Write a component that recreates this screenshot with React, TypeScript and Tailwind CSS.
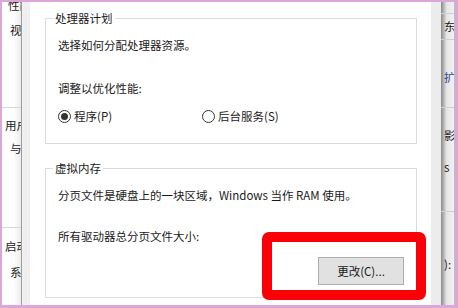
const font = "font-['Microsoft_YaHei','Noto_Sans_CJK_SC',sans-serif]";

const Radio = ({ checked, label }: { checked: boolean; label: string }) => {
    return (
        <div className="flex items-center gap-[3px]">
            <span className="flex h-[13px] w-[13px] items-center justify-center rounded-full border border-[#333333] bg-white">
                {checked && <span className="h-[7px] w-[7px] rounded-full bg-[#333333]"></span>}
            </span>
            <span>{label}</span>
        </div>
    )
}

const App = () => {
    return (
        <div className={`flex h-[308px] w-[458px] overflow-hidden bg-[#dca6d9] pb-[3px] pl-[2px] pr-[3px] pt-[2px] text-[11.5px] leading-[14px] text-[#1a1a1a] ${font}`}>
            {/* left window behind */}
            <div className="flex w-[19px] flex-col overflow-hidden whitespace-nowrap bg-gradient-to-r from-white from-60% to-[#ececec]">
                <div className="-mt-[4px] pl-[6px]">性能</div>
                <div className="mt-[11px] pl-[8px]">视</div>
                <div className="mt-[70px] h-px w-full bg-[#d6d6d6]"></div>
                <div className="mt-[10px] pl-[3px]">用户</div>
                <div className="mt-[9px] pl-[8px]">与</div>
                <div className="mt-[72px] h-px w-full bg-[#d6d6d6]"></div>
                <div className="mt-[11px] pl-[3px]">启动</div>
                <div className="mt-[12px] pl-[8px]">系</div>
            </div>
            <div className="w-px bg-[#9c9c9c]"></div>

            {/* dialog */}
            <div className="flex flex-1 bg-[#f0f0f0]">
                <div className="ml-[8px] flex w-[401px] flex-col bg-white pl-[15px] pr-[14px] pt-[9px]">
                    <fieldset className="border border-[#dcdcdc] px-[12px] pb-[20px]">
                        <legend className="ml-[-5px] px-[2px]">处理器计划</legend>
                        <div className="mt-[13px]">选择如何分配处理器资源。</div>
                        <div className="mt-[29px]">调整以优化性能:</div>
                        <div className="mt-[14px] flex gap-[90px]">
                            <Radio checked label="程序(P)" />
                            <Radio checked={false} label="后台服务(S)" />
                        </div>
                    </fieldset>

                    <fieldset className="relative mt-[17px] border border-[#dcdcdc] px-[12px] pb-[12px]">
                        <legend className="ml-[-5px] px-[2px]">虚拟内存</legend>
                        <div className="mt-[13px]">分页文件是硬盘上的一块区域，Windows 当作 RAM 使用。</div>
                        <div className="mt-[27px]">所有驱动器总分页文件大小:</div>
                        <div className="mt-[14px] flex justify-end">
                            <button className="h-[28px] w-[86px] border border-[#adadad] bg-[#e1e1e1] text-[11.5px] text-[#1a1a1a]">更改(C)...</button>
                        </div>
                        {/* red annotation */}
                        <div className="pointer-events-none absolute bottom-[-3px] right-[-10px] h-[68px] w-[164px] rounded-[7px] border-[10px] border-[#fb0007]"></div>
                    </fieldset>
                </div>
                <div className="w-[10px] bg-[#ececec]"></div>
            </div>

            {/* right window behind */}
            <div className="flex w-[14px] bg-gradient-to-r from-[#8a8a8a] via-[#e6e6e6] via-40% to-[#f3f3f3]">
                <div className="flex flex-1 flex-col overflow-hidden whitespace-nowrap">
                    <div className="mt-[11px] h-px w-full bg-[#cfcfcf]"></div>
                    <div className="mt-[5px] pl-[3px]">东</div>
                    <div className="mt-[6px] h-px w-full bg-[#cfcfcf]"></div>
                    <div className="mt-[30px] pl-[3px] text-[#2b4a8c]">扩</div>
                    <div className="mt-[23px] h-px w-full bg-[#cfcfcf]"></div>
                    <div className="mt-[20px] pl-[3px]">影</div>
                    <div className="mt-[18px] pl-[3px]">s</div>
                    <div className="mt-[37px] h-px w-full bg-[#cfcfcf]"></div>
                    <div className="mt-[45px] pl-[3px]">):</div>
                </div>
                <div className="w-px bg-[#bdbdbd]"></div>
            </div>
        </div>
    )
}

export default App
